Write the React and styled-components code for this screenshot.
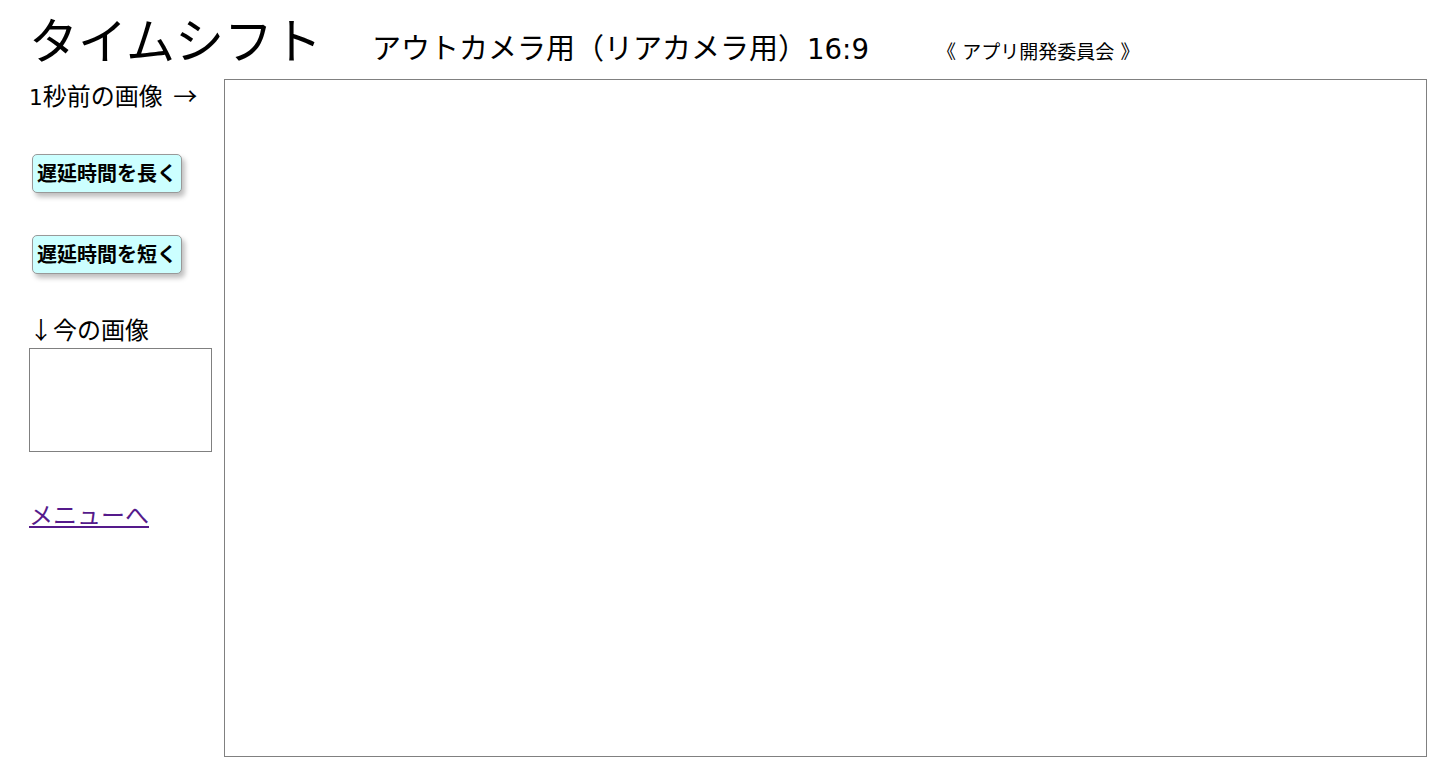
import React from 'react'
import styled, { createGlobalStyle } from 'styled-components'

const GlobalStyle = createGlobalStyle`
  html, body {
    margin: 0;
    padding: 0;
    background: #fff;
  }
  body {
    font-family: "Noto Sans CJK JP", "Noto Sans", sans-serif;
    color: #000;
  }
`

const Page = styled.div`
  padding: 6px 25px 0 29px;
`

const Header = styled.div`
  display: flex;
  align-items: baseline;
  height: 73px;
`

const Title = styled.h1`
  margin: 0;
  font-size: 49px;
  font-weight: 400;
  line-height: 64px;
`

const Subtitle = styled.span`
  margin-left: 50px;
  font-size: 29px;
  line-height: 40px;
`

const Latin = styled.span`
  font-family: "DejaVu Sans", "Noto Sans", sans-serif;
  font-size: ${p => p.$size || '0.95em'};
`

const Credit = styled.span`
  margin-left: 68px;
  font-size: 19px;
  word-spacing: 2px;
`

const Body = styled.div`
  display: flex;
  align-items: flex-start;
`

const Side = styled.div`
  width: 195px;
  flex: none;
  display: flex;
  flex-direction: column;
  align-items: flex-start;
`

const Label = styled.div`
  font-size: 24px;
  line-height: 32px;
  word-spacing: 5px;
  margin-top: ${p => p.$top || 0}px;
`

const Button = styled.button`
  margin-top: ${p => p.$top}px;
  margin-left: 3px;
  padding: 3px 4px 5px;
  font-family: inherit;
  font-size: 20px;
  font-weight: 700;
  line-height: 29px;
  color: #000;
  background: #ccffff;
  border: 1px solid #999;
  border-radius: 5px;
  box-shadow: 3px 4px 5px rgba(0, 0, 0, 0.25);
  cursor: pointer;
`

const Thumb = styled.div`
  width: 181px;
  height: 102px;
  border: 1px solid #808080;
  margin-top: 3px;
`

const MenuLink = styled.a`
  margin-top: 46px;
  font-size: 24px;
  line-height: 32px;
  color: #551a8b;
  text-decoration: underline;
`

const Screen = styled.div`
  flex: none;
  width: 1201px;
  height: 676px;
  border: 1px solid #808080;
`

export default function App() {
  return (
    <>
      <GlobalStyle />
      <Page>
        <Header>
          <Title>タイムシフト</Title>
          <Subtitle>
            アウトカメラ用（リアカメラ用）<Latin>16:9</Latin>
          </Subtitle>
          <Credit>《 アプリ開発委員会 》</Credit>
        </Header>
        <Body>
          <Side>
            <Label><Latin $size="0.9em">1</Latin>秒前の画像 →</Label>
            <Button $top={40}>遅延時間を長く</Button>
            <Button $top={42}>遅延時間を短く</Button>
            <Label $top={39}>↓今の画像</Label>
            <Thumb />
            <MenuLink href="#">メニューへ</MenuLink>
          </Side>
          <Screen />
        </Body>
      </Page>
    </>
  )
}
